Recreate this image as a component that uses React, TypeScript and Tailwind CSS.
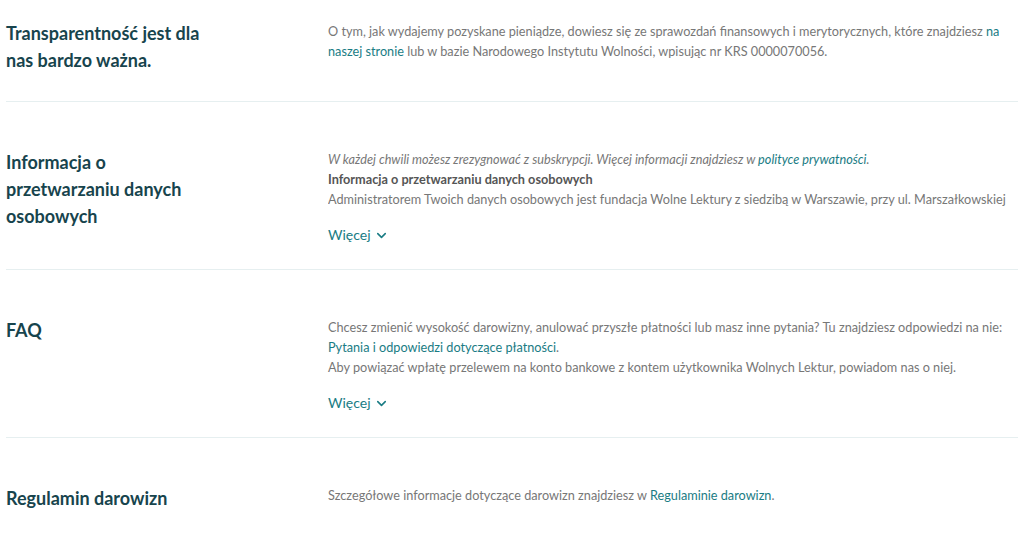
import React from "react";
import { ChevronDown } from "lucide-react";

const font = { fontFamily: "Lato, 'Open Sans', sans-serif" };

function Heading({ children }: { children: React.ReactNode }) {
  return (
    <h2 className="max-w-[205px] text-[18px] leading-[27px] font-bold text-[#17444d]">
      {children}
    </h2>
  );
}

function Link({ children }: { children: React.ReactNode }) {
  return <a className="text-[#1a7c84]">{children}</a>;
}

function More() {
  return (
    <button className="mt-4 flex items-center gap-[3px] text-[14px] leading-5 text-[#1a7c84]">
      Więcej
      <ChevronDown size={15} strokeWidth={2.5} className="mt-[1px]" />
    </button>
  );
}

function Row({
  title,
  children,
  className,
}: {
  title: React.ReactNode;
  children: React.ReactNode;
  className: string;
}) {
  return (
    <section className={`flex items-start border-[#e6eff0] ${className}`}>
      <div className="w-[322px] shrink-0">
        <Heading>{title}</Heading>
      </div>
      <div className="min-w-0 flex-1 whitespace-nowrap text-[12.7px] leading-5 text-[#777777]">{children}</div>
    </section>
  );
}

export default function App() {
  return (
    <div className="min-h-[537px] w-full bg-white px-[6px]" style={font}>
      <Row title="Transparentność jest dla nas bardzo ważna." className="border-b pt-5 pb-[27px]">
        <p className="pt-[1px]">
          O tym, jak wydajemy pozyskane pieniądze, dowiesz się ze sprawozdań finansowych i merytorycznych, które znajdziesz{" "}
          <Link>na</Link>
          <br />
          <Link>naszej stronie</Link> lub w bazie Narodowego Instytutu Wolności, wpisując nr KRS 0000070056.
        </p>
      </Row>

      <Row title="Informacja o przetwarzaniu danych osobowych" className="border-b pt-[47px] pb-6">
        <p className="italic">
          W każdej chwili możesz zrezygnować z subskrypcji. Więcej informacji znajdziesz w{" "}
          <Link>polityce prywatności</Link>.
        </p>
        <p className="font-bold text-[#555555]">Informacja o przetwarzaniu danych osobowych</p>
        <p className="overflow-hidden">
          Administratorem Twoich danych osobowych jest fundacja Wolne Lektury z siedzibą w Warszawie, przy ul. Marszałkowskiej
        </p>
        <More />
      </Row>

      <Row title="FAQ" className="border-b pt-[47px] pb-6">
        <p>
          Chcesz zmienić wysokość darowizny, anulować przyszłe płatności lub masz inne pytania? Tu znajdziesz odpowiedzi na nie:
          <br />
          <Link>Pytania i odpowiedzi dotyczące płatności</Link>.
        </p>
        <p>Aby powiązać wpłatę przelewem na konto bankowe z kontem użytkownika Wolnych Lektur, powiadom nas o niej.</p>
        <More />
      </Row>

      <Row title="Regulamin darowizn" className="pt-[47px] pb-6">
        <p>
          Szczegółowe informacje dotyczące darowizn znajdziesz w <Link>Regulaminie darowizn</Link>.
        </p>
      </Row>
    </div>
  );
}
